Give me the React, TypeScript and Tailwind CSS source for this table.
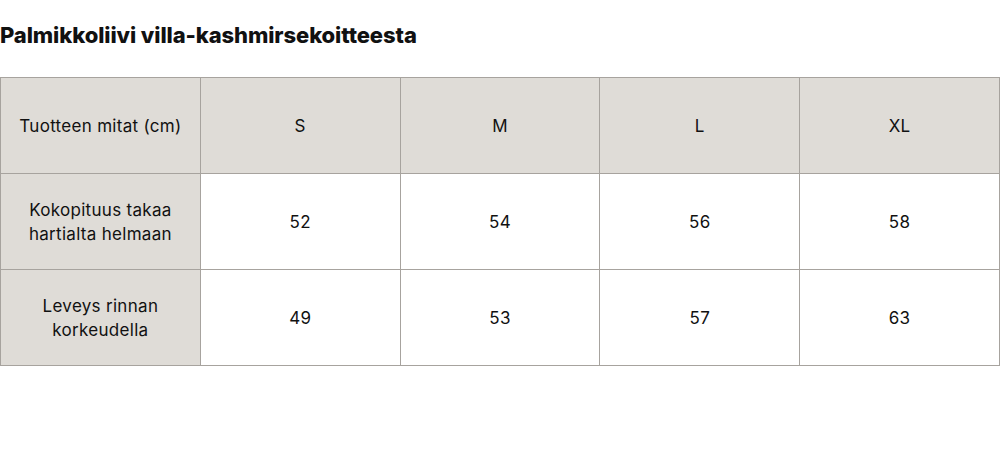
const SIZES = ['S', 'M', 'L', 'XL'];

const ROWS: { label: string[]; values: string[] }[] = [
  { label: ['Kokopituus takaa', 'hartialta helmaan'], values: ['52', '54', '56', '58'] },
  { label: ['Leveys rinnan', 'korkeudella'], values: ['49', '53', '57', '63'] },
];

export default function App() {
  return (
    <div className="w-[1000px] h-[470px] bg-white text-[#111] font-['Inter',sans-serif]">
      <h1 className="pt-[21px] h-[77px] text-[22px] leading-[28px] font-extrabold tracking-[-0.1px]">
        Palmikkoliivi villa-kashmirsekoitteesta
      </h1>
      <table className="w-[1000px] border-collapse table-fixed text-[17px] leading-[24px] tracking-[0.3px]">
        <thead>
          <tr className="h-[96px] bg-[#dfdcd7]">
            <th className="border border-[#a7a39e] font-normal">Tuotteen mitat (cm)</th>
            {SIZES.map((s) => (
              <th key={s} className="border border-[#a7a39e] font-normal">
                {s}
              </th>
            ))}
          </tr>
        </thead>
        <tbody>
          {ROWS.map((row) => (
            <tr key={row.label[0]} className="h-[96px]">
              <td className="border border-[#a7a39e] bg-[#dfdcd7] text-center">
                {row.label[0]}
                <br />
                {row.label[1]}
              </td>
              {row.values.map((v, i) => (
                <td key={i} className="border border-[#a7a39e] text-center">
                  {v}
                </td>
              ))}
            </tr>
          ))}
        </tbody>
      </table>
    </div>
  );
}
